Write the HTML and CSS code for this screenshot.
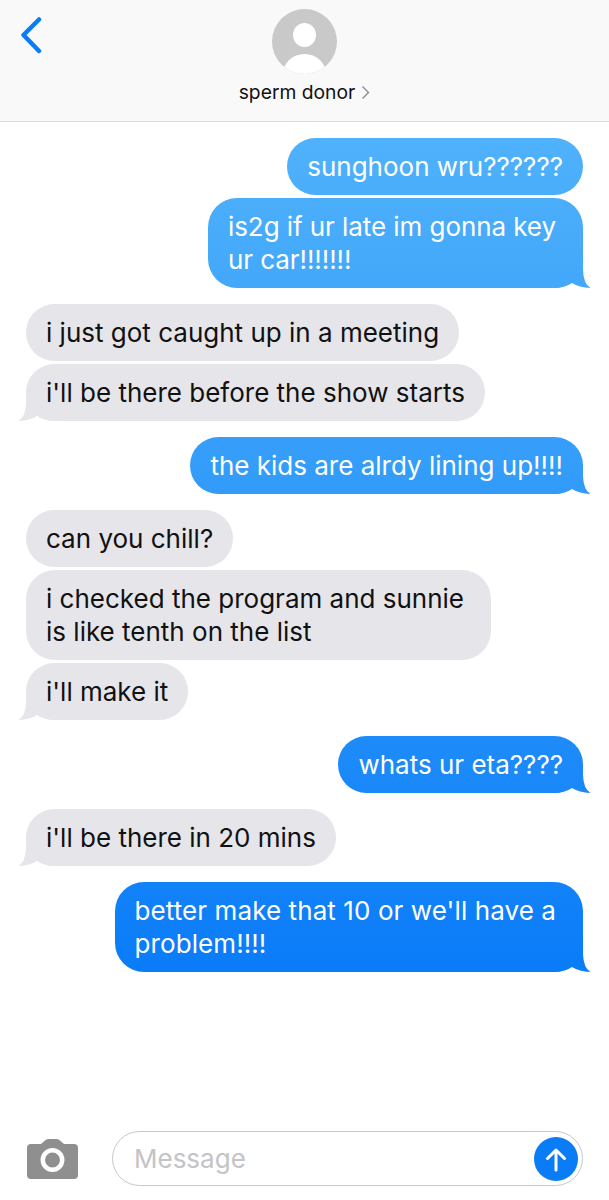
FILE: index.html
```html
<!DOCTYPE html>
<html lang="en">
<head>
<meta charset="utf-8">
<title>Messages</title>
<link rel="stylesheet" href="styles.css">
</head>
<body>
<div class="app">
  <header class="header">
    <svg class="back" width="24" height="38" viewBox="0 0 24 38"><path d="M21 3.500 L5.500 19 L21 35" fill="none" stroke="#0a7cf5" stroke-width="4.500" stroke-linecap="round" stroke-linejoin="round"/></svg>
    <svg class="avatar" width="65" height="65" viewBox="0 0 65 65"><defs><clipPath id="av"><circle cx="32.500" cy="32.500" r="32.500"/></clipPath></defs><g clip-path="url(#av)"><rect width="65" height="65" fill="#c9c9c9"/><ellipse cx="32.500" cy="26" rx="11.500" ry="12" fill="#fff"/><ellipse cx="32.500" cy="66" rx="22" ry="21" fill="#fff"/></g></svg>
    <div class="contact"><span>sperm donor</span><svg width="9" height="15" viewBox="0 0 9 15"><path d="M1.500 1.500 L7.500 7.500 L1.500 13.500" fill="none" stroke="#8a8a8e" stroke-width="1.300"/></svg></div>
  </header>
  <main class="thread">
    <div class="bubble out">sunghoon wru??????</div>
    <div class="bubble out wrapped tight tail group-end">is2g if ur late im gonna key<br>ur car!!!!!!!</div>
    <div class="bubble in">i just got caught up in a meeting</div>
    <div class="bubble in tail group-end">i'll be there before the show starts</div>
    <div class="bubble out tail group-end">the kids are alrdy lining up!!!!</div>
    <div class="bubble in">can you chill?</div>
    <div class="bubble in wrapped">i checked the program and sunnie<br>is like tenth on the list</div>
    <div class="bubble in tail group-end">i'll make it</div>
    <div class="bubble out tail group-end">whats ur eta????</div>
    <div class="bubble in tail group-end">i'll be there in 20 mins</div>
    <div class="bubble out wrapped loose tail">better make that 10 or we'll have a<br>problem!!!!</div>
  </main>
  <footer class="composer">
    <svg class="camera" width="51" height="40" viewBox="0 0 51 40"><path d="M4 5 H14 L18 1.500 Q19.500 0 21 0 H30 Q31.500 0 33 1.500 L37 5 H47 Q51 5 51 9 V36 Q51 40 47 40 H4 Q0 40 0 36 V9 Q0 5 4 5 Z" fill="#8f8f8f"/><circle cx="25.500" cy="21" r="9.700" fill="none" stroke="#fff" stroke-width="4.500"/></svg>
    <div class="field">
      <span class="placeholder">Message</span>
      <svg class="send" width="44" height="44" viewBox="0 0 44 44"><circle cx="22" cy="22" r="22" fill="#0a7cf5"/><path d="M22 33 V13 M13.500 21.500 L22 13 L30.500 21.500" fill="none" stroke="#fff" stroke-width="3" stroke-linecap="round" stroke-linejoin="round"/></svg>
    </div>
  </footer>
</div>
</body>
</html>
```
FILE: styles.css
```css
* { box-sizing: border-box; }
html, body { margin: 0; padding: 0; }
body { background: #fff; font-family: Inter, "Liberation Sans", sans-serif; }
.app { width: 609px; height: 1200px; display: flex; flex-direction: column; overflow: hidden; }
.header { position: relative; height: 122px; flex: none; background: #f9f9f9; border-bottom: 1px solid #dcdcdc; display: flex; flex-direction: column; align-items: center; padding-top: 9px; }
.back { position: absolute; left: 18px; top: 16px; }
.contact { margin-top: 6px; display: flex; align-items: center; gap: 6px; font-size: 19.300px; line-height: 24px; color: #111; }
.thread { flex: 1; display: flex; flex-direction: column; align-items: flex-start; padding: 16px 26px 0; }
.bubble { position: relative; z-index: 0; padding: 12px 20px; border-radius: 29px; font-size: 26px; line-height: 33px; margin-bottom: 3px; white-space: nowrap; }
.bubble.wrapped { padding-right: 27px; }
.bubble.tight { letter-spacing: -.07px; }
.bubble.loose { letter-spacing: .09px; }
.bubble.group-end { margin-bottom: 16px; }
.in { background: #e5e5ea; color: #111; }
.out { align-self: flex-end; color: #fff; background: linear-gradient(#50b2fb 130px, #0a7cf8 975px) fixed; }
.tail::after { content: ""; position: absolute; z-index: -1; bottom: 0; width: 40px; height: 30px; }
.in.tail::after { left: -8px; background: #e5e5ea; clip-path: path("M8 0 L8 12 Q7.500 26 .5 30 Q12 29.500 19 25 Q26 30 38 30 L40 0 Z"); }
.out.tail::after { right: -8px; background: linear-gradient(#50b2fb 130px, #0a7cf8 975px) fixed; clip-path: path("M32 0 L32 12 Q32.500 26 39.500 30 Q28 29.500 21 25 Q14 30 2 30 L0 0 Z"); }
.composer { flex: none; height: 69px; display: flex; align-items: center; padding: 0 26px 14px 27px; gap: 34px; }
.camera { flex: none; }
.field { flex: 1; height: 55px; border: 1px solid #c8c8cc; border-radius: 28px; display: flex; align-items: center; justify-content: space-between; padding: 0 4px 0 21px; }
.placeholder { font-size: 26px; color: #c4c4c7; }
.send { flex: none; }
```
